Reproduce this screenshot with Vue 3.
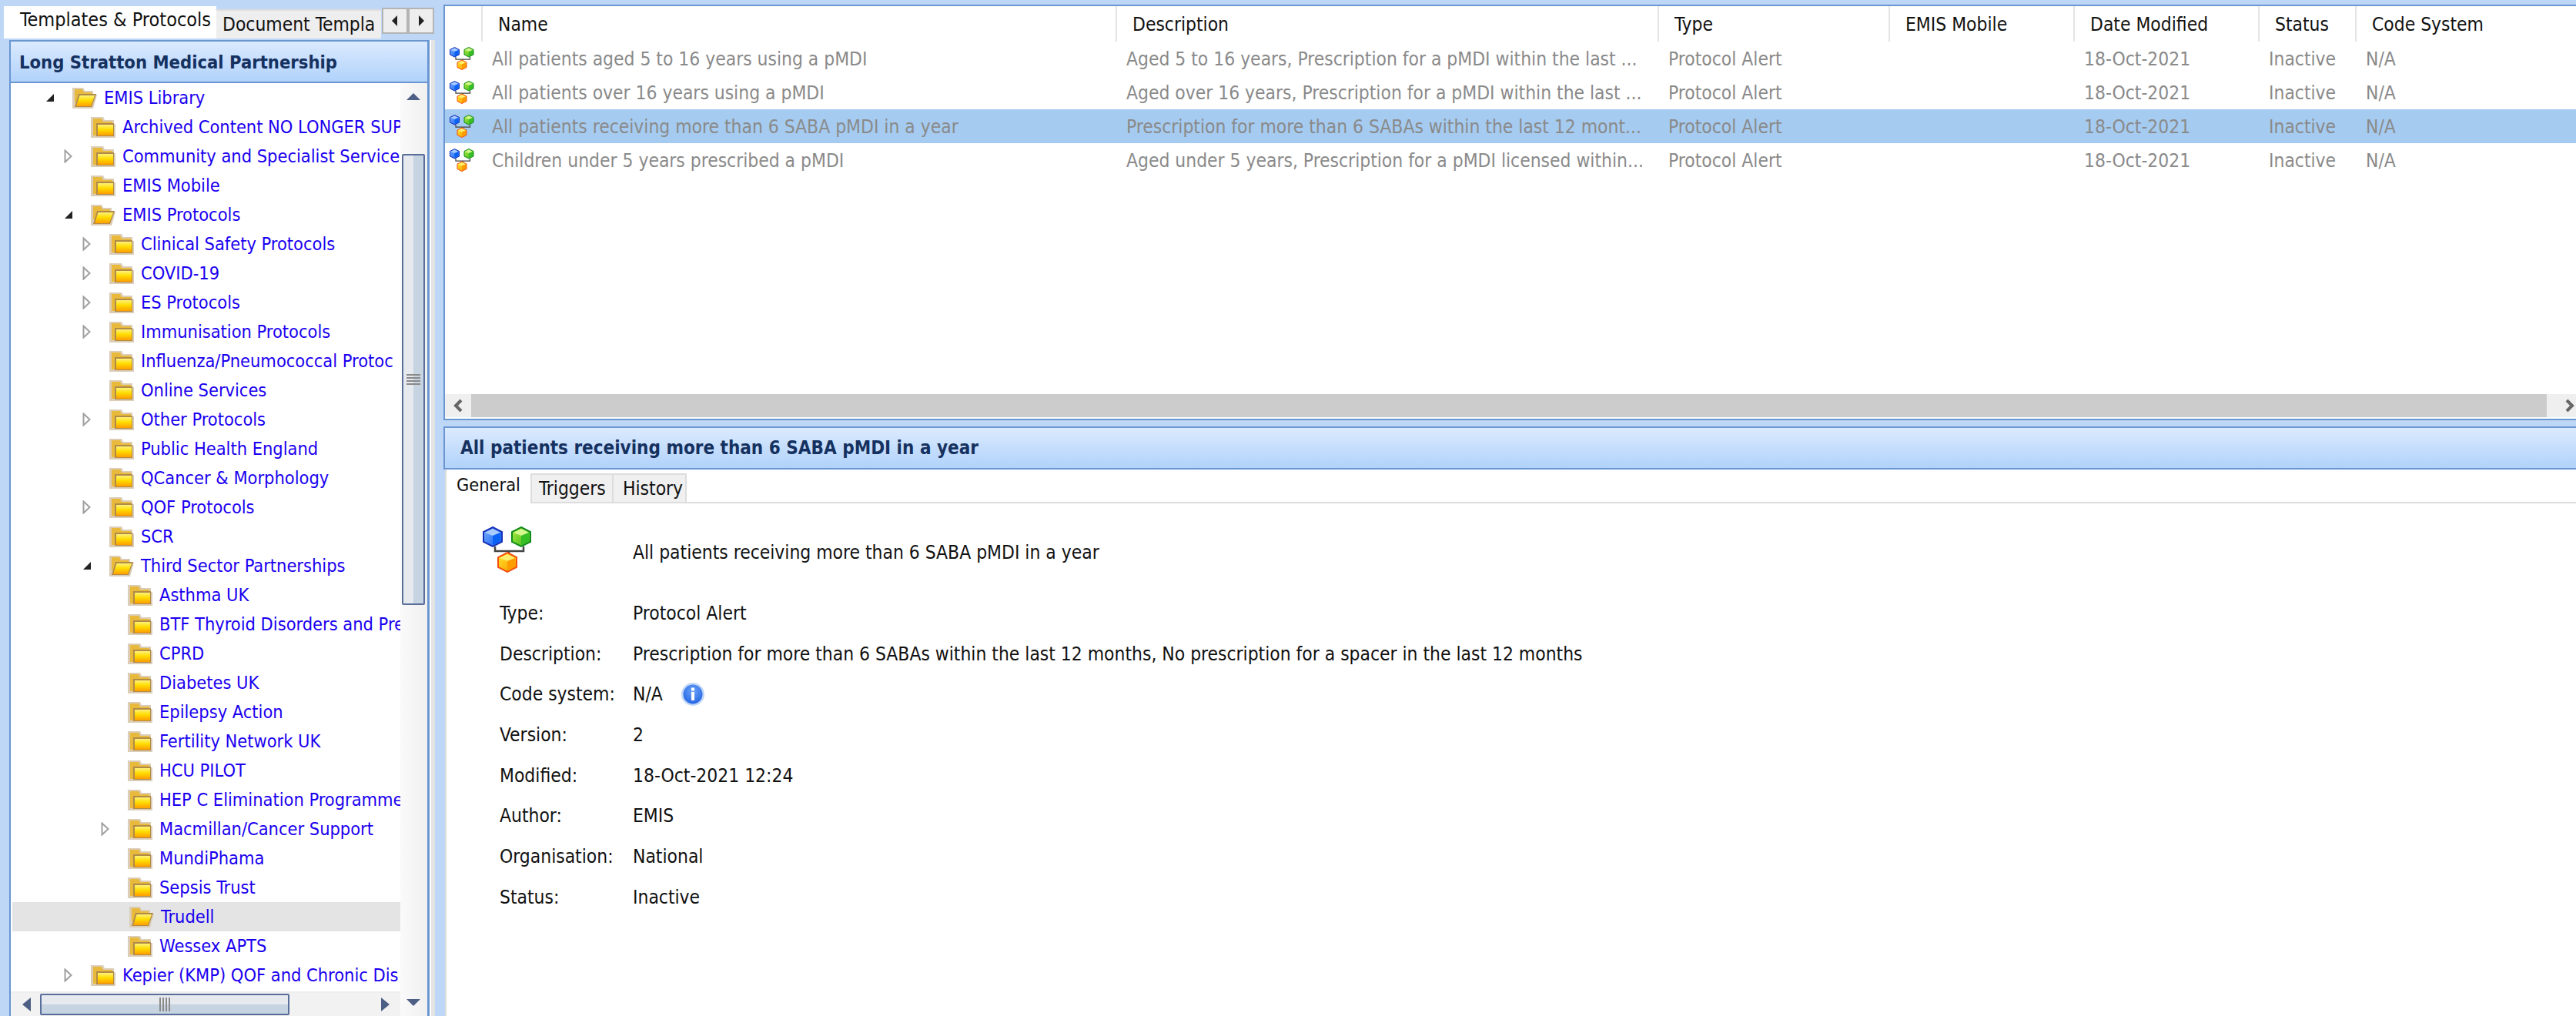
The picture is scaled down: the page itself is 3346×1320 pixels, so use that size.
<template>
  <div class="app">
    <!-- shared gradients and symbols -->
    <svg class="defs" width="0" height="0" aria-hidden="true">
      <defs>
        <linearGradient id="fold" x1="0" y1="0" x2="0" y2="1">
          <stop offset="0" stop-color="#fff27a" />
          <stop offset="0.45" stop-color="#ffdd00" />
          <stop offset="1" stop-color="#ff9d00" />
        </linearGradient>
        <linearGradient id="gemBlue" x1="0" y1="0" x2="1" y2="1">
          <stop offset="0" stop-color="#7fb0ff" />
          <stop offset="1" stop-color="#0a5cf0" />
        </linearGradient>
        <linearGradient id="gemGreen" x1="0" y1="0" x2="1" y2="1">
          <stop offset="0" stop-color="#b6f03c" />
          <stop offset="1" stop-color="#2fb01e" />
        </linearGradient>
        <linearGradient id="gemOrange" x1="0" y1="0" x2="1" y2="1">
          <stop offset="0" stop-color="#ffe82a" />
          <stop offset="1" stop-color="#ff9400" />
        </linearGradient>
        <radialGradient id="infoFill" cx="0.5" cy="0.35" r="0.7">
          <stop offset="0" stop-color="#6ea4fb" />
          <stop offset="1" stop-color="#1f62e0" />
        </radialGradient>
      </defs>
      <symbol id="gems" viewBox="0 0 64 60">
        <path d="M16 26v6h37v-6M34 32v6" fill="none" stroke="#444" stroke-width="2.5" />
        <polygon points="13,1 25,7 25,20 13,26 1,20 1,7" fill="url(#gemBlue)" stroke="#1630b8" stroke-width="2" />
        <polygon points="13,3 23,8 13,12 3,8" fill="#a8caff" />
        <polygon points="13,12 23,8 23,19 13,24" fill="#0a62f4" />
        <polygon points="50,1 62,7 62,20 50,26 38,20 38,7" fill="url(#gemGreen)" stroke="#0f8a1a" stroke-width="2" />
        <polygon points="50,3 60,8 50,12 40,8" fill="#d6f78e" />
        <polygon points="50,12 60,8 60,19 50,24" fill="#35bf25" />
        <polygon points="32,34 44,40 44,53 32,59 20,53 20,40" fill="url(#gemOrange)" stroke="#f4500c" stroke-width="2" />
        <polygon points="32,36 42,41 32,45 22,41" fill="#ffef70" />
        <polygon points="32,45 42,41 42,52 32,57" fill="#ff9c00" />
      </symbol>
      <symbol id="folderClosed" viewBox="0 0 32 28">
        <path d="M0 1h16l2 4h12v5h2v18H0z" fill="#dccdb6" />
        <path d="M3 3h11l2 4h12v3H8v15H3z" fill="#e8b93a" />
        <rect x="7" y="9" width="23" height="17" fill="#b08a4a" />
        <rect x="9" y="11" width="20" height="14" fill="url(#fold)" />
      </symbol>
      <symbol id="folderOpen" viewBox="0 0 32 28">
        <path d="M0 1h14l2 4h11v5h5l-5 18H0z" fill="#dccdb6" />
        <path d="M3 3h10l2 4h10v3H8l-3 10H3z" fill="#e8b93a" />
        <polygon points="8,9 31,9 25,26 3,26" fill="#b08a4a" />
        <polygon points="9.5,11 29,11 24,25 5,25" fill="url(#fold)" />
      </symbol>
    </svg>

    <aside class="left">
      <div class="tabstrip">
        <div class="ltab active">Templates &amp; Protocols</div>
        <div class="ltab">Document Templa</div>
        <div class="navbtns">
          <button class="navbtn"><svg width="8" height="14" viewBox="0 0 8 14"><polygon points="7,0 7,14 0,7" fill="#222" /></svg></button>
          <button class="navbtn"><svg width="8" height="14" viewBox="0 0 8 14"><polygon points="1,0 1,14 8,7" fill="#222" /></svg></button>
        </div>
      </div>
      <div class="left-body">
        <div class="tree-panel">
          <div class="panel-head">Long Stratton Medical Partnership</div>
          <div class="tree-wrap">
            <div class="tree-main">
              <div class="tree">
                <div
                  v-for="row in tree"
                  :key="row.name"
                  class="tree-row"
                  :class="{ selected: row.selected }"
                  :style="{ paddingLeft: 45 + row.level * 24 + 'px' }"
                >
                  <span class="expander">
                    <svg v-if="row.state === 'open'" width="12" height="12" viewBox="0 0 12 12"><polygon points="11,1 11,11 1,11" fill="#222" /></svg>
                    <svg v-else-if="row.state === 'closed'" width="11" height="18" viewBox="0 0 11 18"><polygon points="1.5,1.5 9.5,9 1.5,16.5" fill="#fff" stroke="#a0a0a0" stroke-width="2" /></svg>
                  </span>
                  <svg class="folder" width="32" height="28"><use :href="row.state === 'open' || row.selected ? '#folderOpen' : '#folderClosed'" /></svg>
                  <span class="tree-label">{{ row.name }}</span>
                </div>
              </div>
              <div class="hscroll">
                <svg width="11" height="18" viewBox="0 0 11 18"><polygon points="11,0 11,18 0,9" fill="#4d5f85" /></svg>
                <div class="hthumb">
                  <span class="hgrip"></span>
                </div>
                <svg width="11" height="18" viewBox="0 0 11 18"><polygon points="0,0 0,18 11,9" fill="#4d5f85" /></svg>
              </div>
            </div>
            <div class="vscroll">
              <svg class="varrow" width="18" height="9" viewBox="0 0 18 9"><polygon points="9,0 18,9 0,9" fill="#4d5f85" /></svg>
              <div class="vthumb"><span class="vgrip"></span></div>
              <svg class="varrow bottom" width="18" height="9" viewBox="0 0 18 9"><polygon points="0,0 18,0 9,9" fill="#4d5f85" /></svg>
            </div>
          </div>
        </div>
        <div class="tree-edge"></div>
      </div>
    </aside>

    <main class="right">
      <section class="table-panel">
        <div class="grid-row header">
          <div class="cell first"></div>
          <div v-for="col in columns" :key="col" class="cell">{{ col }}</div>
        </div>
        <div
          v-for="(item, i) in protocols"
          :key="item.name"
          class="grid-row body"
          :class="{ selected: i === 2 }"
        >
          <div class="cell first"><svg width="32" height="32"><use href="#gems" /></svg></div>
          <div class="cell">{{ item.name }}</div>
          <div class="cell">{{ item.description }}</div>
          <div class="cell">Protocol Alert</div>
          <div class="cell"></div>
          <div class="cell">18-Oct-2021</div>
          <div class="cell">Inactive</div>
          <div class="cell">N/A</div>
        </div>
        <div class="spacer"></div>
        <div class="table-scroll">
          <div class="tbtn"><svg width="12" height="18" viewBox="0 0 12 18"><polyline points="10,2 3,9 10,16" fill="none" stroke="#666" stroke-width="4" /></svg></div>
          <div class="ttrack"></div>
          <div class="tbtn right-btn"><svg width="12" height="18" viewBox="0 0 12 18"><polyline points="2,2 9,9 2,16" fill="none" stroke="#666" stroke-width="4" /></svg></div>
        </div>
      </section>

      <section class="detail-head">All patients receiving more than 6 SABA pMDI in a year</section>

      <section class="detail">
        <div class="dtabs">
          <div class="dtab active">General</div>
          <div class="dtab">Triggers</div>
          <div class="dtab">History</div>
          <div class="dtab-rest"></div>
        </div>
        <div class="dbody">
          <div class="dtitle">
            <svg class="dicon" width="64" height="60"><use href="#gems" /></svg>
            <span>All patients receiving more than 6 SABA pMDI in a year</span>
          </div>
          <div v-for="f in fields" :key="f.label" class="field">
            <span class="flabel">{{ f.label }}</span>
            <span class="fvalue">{{ f.value }}</span>
            <svg v-if="f.info" class="info" width="32" height="32" viewBox="0 0 32 32">
              <circle cx="16" cy="16" r="15" fill="#c0d6f6" />
              <circle cx="16" cy="16" r="12.5" fill="url(#infoFill)" />
              <rect x="14" y="7.5" width="4" height="4" fill="#fff" />
              <rect x="14" y="13" width="4" height="11" fill="#fff" />
            </svg>
          </div>
        </div>
      </section>
    </main>
  </div>
</template>

<script setup>
const tree = [
  { name: 'EMIS Library', level: 0, state: 'open' },
  { name: 'Archived Content NO LONGER SUP', level: 1 },
  { name: 'Community and Specialist Services', level: 1, state: 'closed' },
  { name: 'EMIS Mobile', level: 1 },
  { name: 'EMIS Protocols', level: 1, state: 'open' },
  { name: 'Clinical Safety Protocols', level: 2, state: 'closed' },
  { name: 'COVID-19', level: 2, state: 'closed' },
  { name: 'ES Protocols', level: 2, state: 'closed' },
  { name: 'Immunisation Protocols', level: 2, state: 'closed' },
  { name: 'Influenza/Pneumococcal Protoc', level: 2 },
  { name: 'Online Services', level: 2 },
  { name: 'Other Protocols', level: 2, state: 'closed' },
  { name: 'Public Health England', level: 2 },
  { name: 'QCancer & Morphology', level: 2 },
  { name: 'QOF Protocols', level: 2, state: 'closed' },
  { name: 'SCR', level: 2 },
  { name: 'Third Sector Partnerships', level: 2, state: 'open' },
  { name: 'Asthma UK', level: 3 },
  { name: 'BTF Thyroid Disorders and Pre', level: 3 },
  { name: 'CPRD', level: 3 },
  { name: 'Diabetes UK', level: 3 },
  { name: 'Epilepsy Action', level: 3 },
  { name: 'Fertility Network UK', level: 3 },
  { name: 'HCU PILOT', level: 3 },
  { name: 'HEP C Elimination Programme', level: 3 },
  { name: 'Macmillan/Cancer Support', level: 3, state: 'closed' },
  { name: 'MundiPhama', level: 3 },
  { name: 'Sepsis Trust', level: 3 },
  { name: 'Trudell', level: 3, selected: true },
  { name: 'Wessex APTS', level: 3 },
  { name: 'Kepier (KMP) QOF and Chronic Dis', level: 1, state: 'closed' }
]

const columns = ['Name', 'Description', 'Type', 'EMIS Mobile', 'Date Modified', 'Status', 'Code System']

const protocols = [
  { name: 'All patients aged 5 to 16 years using a pMDI', description: 'Aged 5 to 16 years, Prescription for a pMDI within the last ...' },
  { name: 'All patients over 16 years using a pMDI', description: 'Aged over 16 years, Prescription for a pMDI within the last ...' },
  { name: 'All patients receiving more than 6 SABA pMDI in a year', description: 'Prescription for more than 6 SABAs within the last 12 mont...' },
  { name: 'Children under 5 years prescribed a pMDI', description: 'Aged under 5 years, Prescription for a pMDI licensed within...' }
]

const fields = [
  { label: 'Type:', value: 'Protocol Alert' },
  { label: 'Description:', value: 'Prescription for more than 6 SABAs within the last 12 months, No prescription for a spacer in the last 12 months' },
  { label: 'Code system:', value: 'N/A', info: true },
  { label: 'Version:', value: '2' },
  { label: 'Modified:', value: '18-Oct-2021 12:24' },
  { label: 'Author:', value: 'EMIS' },
  { label: 'Organisation:', value: 'National' },
  { label: 'Status:', value: 'Inactive' }
]
</script>

<style>
html, body {
  margin: 0;
  background: #bfd7f6;
}
</style>

<style scoped>
.app {
  display: flex;
  width: 3346px;
  height: 1320px;
  overflow: hidden;
  background: #bfd7f6;
  font-family: "DejaVu Sans Condensed", "DejaVu Sans", sans-serif;
  font-stretch: condensed;
  font-size: 24.4px;
  color: #111;
}

.defs {
  position: absolute;
}

/* left column */
.left {
  width: 566px;
  flex: none;
  display: flex;
  flex-direction: column;
  padding-top: 8px;
  box-sizing: border-box;
}

.tabstrip {
  display: flex;
  height: 42px;
  flex: none;
  padding-left: 5px;
  align-items: flex-end;
}

.ltab {
  box-sizing: border-box;
  width: 214px;
  height: 38px;
  line-height: 36px;
  padding-left: 8px;
  background: #eeeeee;
  border-top: 2px solid #dddddd;
  white-space: nowrap;
  overflow: hidden;
}

.ltab.active {
  width: 276px;
  height: 42px;
  line-height: 36px;
  padding-left: 21px;
  font-size: 25px;
  background: #fff;
  border-top: none;
}

.navbtns {
  display: flex;
  align-self: flex-start;
  margin-top: 2px;
  margin-left: 1px;
}

.navbtn {
  width: 34px;
  height: 34px;
  padding: 0;
  border: 2px solid #b4b4b4;
  background: #eeeeee;
  display: flex;
  align-items: center;
  justify-content: center;
}

.left-body {
  flex: 1;
  display: flex;
  padding: 2px 0 0 12px;
  min-height: 0;
}

.tree-panel {
  width: 546px;
  box-sizing: border-box;
  border: solid #6a96d2;
  border-width: 2px 3px 0 2px;
  display: flex;
  flex-direction: column;
  background: #fff;
}

.panel-head {
  height: 54px;
  flex: none;
  box-sizing: border-box;
  line-height: 54px;
  padding-left: 11px;
  font-size: 23.6px;
  font-weight: 700;
  color: #15315f;
  background: linear-gradient(#dbeafe, #b1d2fb);
  border-bottom: 2px solid #6a96d2;
}

.tree-edge {
  width: 2px;
  background: #fff;
  border-right: 5px solid #e4e4e4;
}

.tree-wrap {
  flex: 1;
  display: flex;
  min-height: 0;
}

.tree-main {
  width: 506px;
  display: flex;
  flex-direction: column;
}

.tree {
  flex: 1;
  overflow: hidden;
  font-size: 23.4px;
}

.tree-row {
  box-sizing: border-box;
  height: 38px;
  display: flex;
  align-items: center;
  white-space: nowrap;
  color: #1a00f0;
}

.tree-row.selected {
  background: #e4e4e4;
  margin-left: 2px;
  padding-right: 0;
}

.expander {
  width: 35px;
  flex: none;
  display: flex;
  align-items: center;
}

.folder {
  flex: none;
  margin-right: 9px;
}

.tree-label {
  line-height: 38px;
}

.hscroll {
  height: 32px;
  flex: none;
  display: flex;
  align-items: center;
  padding-left: 15px;
  background: #f2f2f2;
  border-top: 2px solid #eeeeee;
  box-sizing: border-box;
}

.hthumb {
  width: 324px;
  height: 28px;
  margin: 0 119px 0 12px;
  box-sizing: border-box;
  border: 2px solid #5a6e9b;
  border-radius: 2px;
  background: linear-gradient(#e6e9ee 50%, #c6d3e0 50%);
  display: flex;
  align-items: center;
  justify-content: center;
}

.hgrip {
  width: 14px;
  height: 18px;
  background: repeating-linear-gradient(90deg, #8a8a8a 0 2px, transparent 2px 4px);
}

.vscroll {
  width: 35px;
  flex: none;
  position: relative;
  background: linear-gradient(90deg, #fafafa, #f0f0f0);
}

.varrow {
  position: absolute;
  left: 8px;
  top: 13px;
}

.varrow.bottom {
  top: auto;
  bottom: 13px;
}

.vthumb {
  width: 30px;
  height: 586px;
  margin: 92px 0 0 2px;
  box-sizing: border-box;
  border: 2px solid #5a6e9b;
  border-radius: 2px;
  background: linear-gradient(90deg, #e6e9ee 50%, #c6d3e0 50%);
  display: flex;
  align-items: center;
  justify-content: center;
}

.vgrip {
  width: 18px;
  height: 14px;
  background: repeating-linear-gradient(#8a8a8a 0 2px, transparent 2px 4px);
}

/* right column */
.right {
  margin-left: 10px;
  width: 2770px;
  padding-top: 6px;
  display: flex;
  flex-direction: column;
  box-sizing: border-box;
}

.table-panel {
  height: 540px;
  box-sizing: border-box;
  flex: none;
  background: #fff;
  border: solid #6a96d2;
  border-width: 2px 0 2px 2px;
  display: flex;
  flex-direction: column;
}

.grid-row {
  display: grid;
  grid-template-columns: 47px 824px 704px 300px 240px 240px 126px 287px;
}

.grid-row.header {
  height: 46px;
  line-height: 48px;
}

.grid-row.header .cell {
  padding-left: 22px;
  border-right: 2px solid #e4e4e4;
  margin-right: -2px;
}

.grid-row.header .cell:last-child {
  border-right: none;
}

.grid-row.body {
  height: 44px;
  line-height: 46px;
  color: #8a8a8a;
}

.grid-row.body.selected {
  background: #a5cbf0;
}

.cell {
  box-sizing: border-box;
  white-space: nowrap;
  overflow: hidden;
  padding-left: 14px;
}

.grid-row .cell.first {
  padding-left: 6px;
  display: flex;
  align-items: center;
}

.spacer {
  flex: 1;
}

.table-scroll {
  height: 30px;
  margin-bottom: 2px;
  display: flex;
  flex: none;
}

.tbtn {
  width: 34px;
  background: #efefef;
  display: flex;
  align-items: center;
  justify-content: center;
}

.tbtn.right-btn {
  width: 38px;
  justify-content: flex-end;
  padding-right: 2px;
  box-sizing: border-box;
}

.ttrack {
  flex: 1;
  background: #cccccc;
}

.detail-head {
  height: 56px;
  margin-top: 8px;
  box-sizing: border-box;
  flex: none;
  line-height: 52px;
  padding-left: 20px;
  font-size: 24px;
  font-weight: 700;
  color: #15315f;
  background: linear-gradient(#dbeafe, #b1d2fb);
  border: solid #6a96d2;
  border-width: 2px 0 2px 2px;
}

.detail {
  flex: 1;
  margin-left: 2px;
  background: #fff;
  border-left: 2px solid #dddddd;
  display: flex;
  flex-direction: column;
}

.dtabs {
  display: flex;
  height: 44px;
  flex: none;
  align-items: flex-end;
}

.dtab {
  box-sizing: border-box;
  height: 39px;
  line-height: 36px;
  background: #f0f0f0;
  border: 2px solid #dddddd;
  border-left: none;
  padding: 0 0 0 9px;
  white-space: nowrap;
  overflow: hidden;
}

.dtab.active {
  width: 109px;
  height: 44px;
  line-height: 40px;
  padding-left: 13px;
  font-size: 23.4px;
  background: #fff;
  border: none;
}

.dtab:nth-child(2) {
  width: 108px;
  border-left: 2px solid #dddddd;
}

.dtab:nth-child(3) {
  width: 95px;
  padding-left: 12px;
}

.dtab-rest {
  flex: 1;
  border-bottom: 2px solid #dddddd;
}

.dbody {
  padding: 30px 0 0 47px;
}

.dtitle {
  display: flex;
  align-items: center;
  height: 60px;
  margin-bottom: 26px;
}

.dicon {
  flex: none;
  margin-right: 131px;
}

.dtitle span {
  padding-top: 6px;
}

.field {
  display: flex;
  align-items: center;
  height: 52.7px;
  padding-left: 22px;
}

.flabel {
  width: 173px;
  flex: none;
}

.info {
  margin-left: 23px;
}
</style>
